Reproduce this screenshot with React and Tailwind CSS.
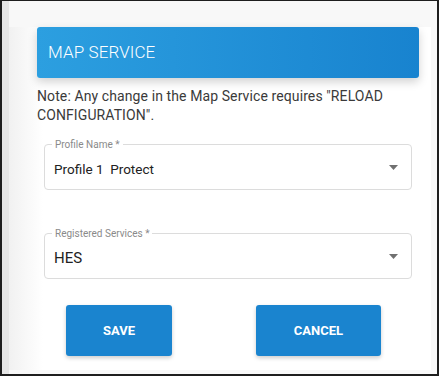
export default function App() {
  const fields = [
    { label: "Profile Name *", value: "Profile 1  Protect", size: "text-[13.5px]", mt: "mt-[19px]" },
    { label: "Registered Services *", value: "HES", size: "text-[15px]", mt: "mt-[43px]" },
  ];

  return (
    <div className="w-[439px] h-[376px] border-l-2 border-t border-r-2 border-b-2 border-[#1e1e1e] bg-[#f8f8f8] overflow-hidden flex font-['Roboto',sans-serif]">
      {/* left gutter */}
      <div className="w-[7px] shrink-0 bg-[#e6e6e6]" />

      <div className="flex-1 pt-[30px] pr-[6px]">
        <div className="h-full bg-white bg-gradient-to-r from-[#f1f1f1] via-white via-[8%] to-white">
          {/* header */}
          <div className="ml-[28px] -mt-[4px] w-[382px] h-[51px] rounded-[3px] bg-gradient-to-r from-[#2c9fe0] to-[#1883cf] shadow-[0_4px_10px_rgba(0,0,0,0.18)] flex items-center pl-[11px]">
            <span className="text-white text-[17px] font-light tracking-[0.1px]">MAP SERVICE</span>
          </div>

          {/* note */}
          <p className="ml-[28px] mt-[9px] w-[386px] text-[14px] tracking-[0.1px] leading-[19px] text-[#3a3a3a]">
            Note: Any change in the Map Service requires "RELOAD CONFIGURATION".
          </p>

          {fields.map((f) => (
            <div key={f.label} className={`${f.mt} ml-[35px] w-[368px] h-[46px] relative rounded-[4px] border border-[#dcdcdc] flex items-center pt-[4px] pl-[9px] pr-[13px]`}>
              <span className="absolute -top-[6px] left-[7px] bg-white px-[3px] text-[10px] leading-[12px] text-[#8a8a8a]">
                {f.label}
              </span>
              <span className={`flex-1 ${f.size} text-[#222] whitespace-pre`}>{f.value}</span>
              <svg width="9" height="5" viewBox="0 0 9 5" className="-mt-[4px]">
                <path d="M0 0h9L4.5 5z" fill="#707070" />
              </svg>
            </div>
          ))}

          {/* buttons */}
          <div className="flex mt-[26px]">
            <button className="ml-[57px] w-[106px] h-[51px] rounded-[3px] bg-[#1a84cf] shadow-[0_2px_4px_rgba(0,0,0,0.2)] text-white text-[13px] font-bold">
              SAVE
            </button>
            <button className="ml-[84px] w-[125px] h-[51px] rounded-[3px] bg-[#1a84cf] shadow-[0_2px_4px_rgba(0,0,0,0.2)] text-white text-[13px] font-bold">
              CANCEL
            </button>
          </div>
        </div>
      </div>
    </div>
  );
}
